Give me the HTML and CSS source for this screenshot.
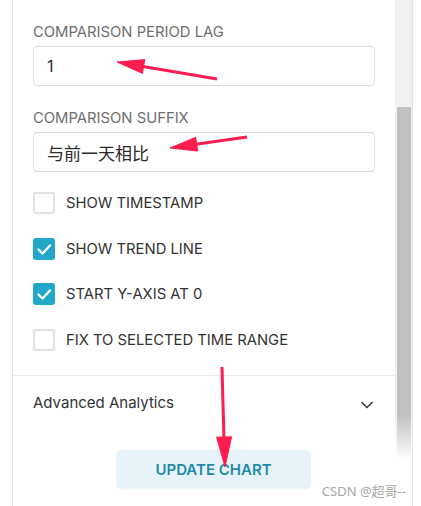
FILE: index.html
```html
<!DOCTYPE html>
<html lang="zh">
<head>
<meta charset="utf-8">
<title>Chart controls</title>
<link rel="stylesheet" href="styles.css">
</head>
<body>
<div class="panel">
  <div class="content">
    <div class="field">
      <div class="field-label">COMPARISON PERIOD LAG</div>
      <div class="input">1</div>
    </div>
    <div class="field field-next">
      <div class="field-label">COMPARISON SUFFIX</div>
      <div class="input input-cjk">与前一天相比</div>
    </div>
    <div class="checks">
      <div class="check"><span class="box"></span><span class="check-label">SHOW TIMESTAMP</span></div>
      <div class="check"><span class="box checked"><svg viewBox="0 0 22 22" width="22" height="22"><path d="M5.5 11.5 L9.5 15.5 L17 7.5" fill="none" stroke="#fff" stroke-width="2.4" stroke-linecap="round" stroke-linejoin="round"/></svg></span><span class="check-label">SHOW TREND LINE</span></div>
      <div class="check"><span class="box checked"><svg viewBox="0 0 22 22" width="22" height="22"><path d="M5.5 11.5 L9.5 15.5 L17 7.5" fill="none" stroke="#fff" stroke-width="2.4" stroke-linecap="round" stroke-linejoin="round"/></svg></span><span class="check-label">START Y-AXIS AT 0</span></div>
      <div class="check"><span class="box"></span><span class="check-label">FIX TO SELECTED TIME RANGE</span></div>
    </div>
    <div class="divider"></div>
    <div class="section">
      <span class="section-title">Advanced Analytics</span>
      <svg class="chevron" viewBox="0 0 14 14" width="14" height="14"><path d="M1.5 4 L7 9.5 L12.5 4" fill="none" stroke="#333" stroke-width="1.5"/></svg>
    </div>
    <div class="actions"><button class="btn">UPDATE CHART</button></div>
  </div>
  <div class="scrollbar"><div class="thumb"></div><div class="fade"></div></div>
</div>
<svg class="annotations" viewBox="0 0 421 506" width="421" height="506">
  <g fill="#fd1d4f" stroke="#fd1d4f">
    <line x1="217" y1="79" x2="140" y2="66" stroke-width="3"/>
    <polygon points="117,62 142.4,73.4 144.8,59.6" stroke-width="1"/>
    <line x1="247" y1="137" x2="194" y2="144.5" stroke-width="3"/>
    <polygon points="170,148 197.7,151.1 195.7,137.3" stroke-width="1"/>
    <line x1="222" y1="367" x2="224" y2="440" stroke-width="3"/>
    <polygon points="225,467 216.6,437.2 231.6,436.8" stroke-width="1"/>
  </g>
</svg>
<div class="watermark">CSDN @超哥--</div>
</body>
</html>
```

FILE: styles.css
```css
* { box-sizing: border-box; }
html, body { margin: 0; padding: 0; }
body {
  width: 421px;
  height: 506px;
  overflow: hidden;
  background: #fff;
  font-family: Inter, "Noto Sans", "Noto Sans CJK SC", sans-serif;
  position: relative;
}
.panel {
  margin-left: 12px;
  width: 401px;
  height: 506px;
  display: flex;
  border-left: 1px solid #e3e3e3;
  border-right: 1px solid #e3e3e3;
}
.content {
  width: 382px;
  padding: 22px 20px 0 20px;
}
.field-label {
  font-size: 14.8px;
  line-height: 20px;
  color: #6e6e6e;
  margin-bottom: 4px;
}
.field-next { margin-top: 22px; }
.input {
  height: 40px;
  border: 1px solid #d9dce4;
  border-radius: 4px;
  padding: 0 13px;
  display: flex;
  align-items: center;
  font-size: 16px;
  color: #2b2b2b;
  font-family: Inter, "Noto Sans CJK SC", sans-serif;
}
.input-cjk { font-size: 17px; }
.checks {
  margin-top: 20px;
  display: flex;
  flex-direction: column;
  gap: 23.5px;
}
.check {
  display: flex;
  align-items: center;
  height: 22px;
}
.box {
  width: 22px;
  height: 22px;
  border: 2px solid #e2e2e2;
  border-radius: 3px;
  margin-right: 11px;
  flex: none;
  display: block;
}
.box.checked {
  border: none;
  background: #20a7c9;
}
.box svg { display: block; }
.check-label {
  font-size: 14.8px;
  color: #333;
  line-height: 20px;
}
.divider {
  height: 1px;
  background: #ececec;
  margin: 24px -20px 0 -20px;
}
.section {
  display: flex;
  align-items: center;
  justify-content: space-between;
  padding-top: 16px;
  height: 38px;
}
.section-title {
  font-size: 15px;
  line-height: 22px;
  color: #333;
}
.chevron {
  margin-right: 1px;
  margin-top: 5px;
}
.actions {
  padding-top: 36px;
  padding-left: 83px;
}
.btn {
  width: 195px;
  height: 39px;
  border: none;
  border-radius: 5px;
  background: #e6f4f9;
  color: #1f8aab;
  font-family: Inter, sans-serif;
  font-size: 15px;
  font-weight: 600;
  padding: 0;
}
.scrollbar {
  width: 17px;
  background: #f1f1f1;
  position: relative;
  padding-left: 2px;
  padding-top: 107px;
}
.thumb {
  width: 14px;
  height: 360px;
  background: #c1c1c1;
}
.fade {
  position: absolute;
  left: 0;
  right: 0;
  top: 415px;
  bottom: 0;
  background: linear-gradient(to bottom, rgba(255,255,255,0) 0, #fff 45px);
}
.annotations {
  position: absolute;
  left: 0;
  top: 0;
  pointer-events: none;
}
.watermark {
  position: absolute;
  right: 15px;
  top: 482px;
  font-family: "Noto Sans", "Noto Sans CJK SC", sans-serif;
  font-size: 13px;
  line-height: 18px;
  color: #a6a6a6;
}
```
